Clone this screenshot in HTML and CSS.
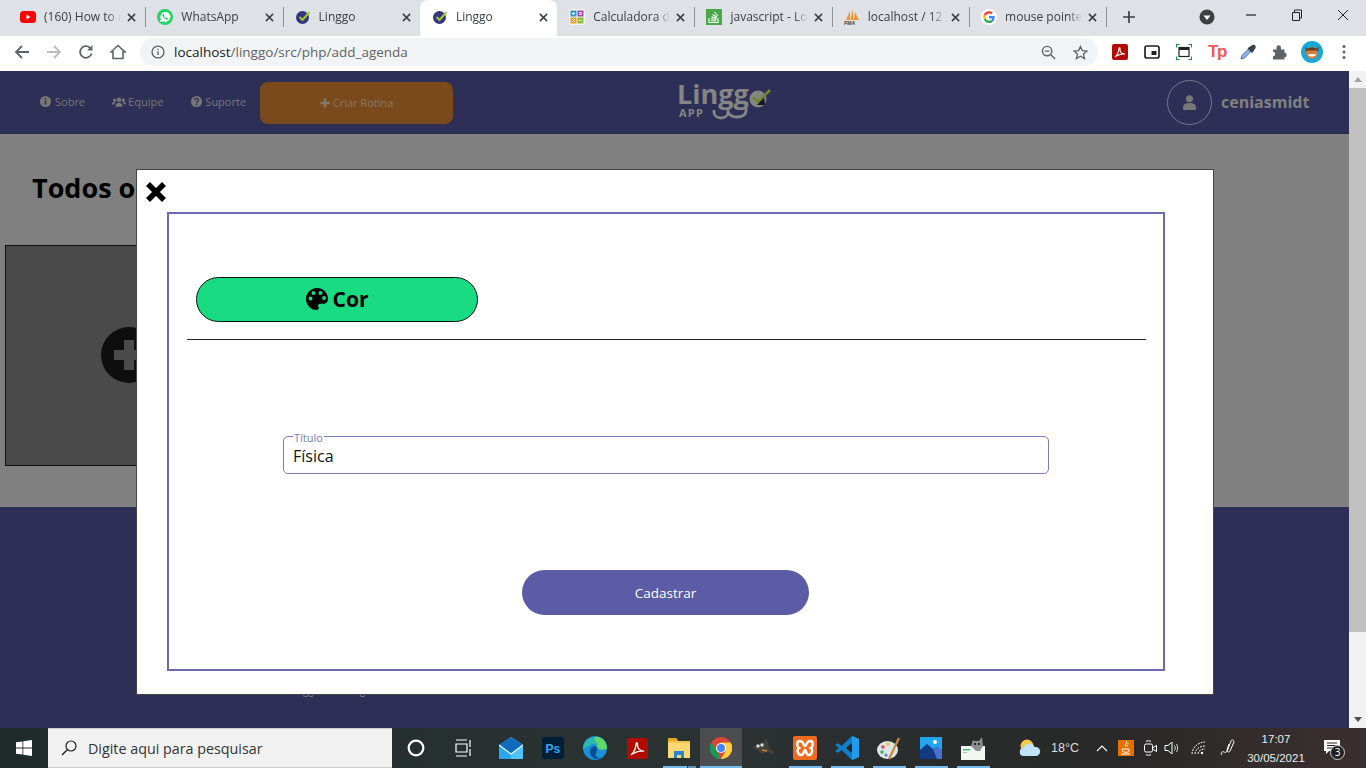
FILE: index.html
```html
<!DOCTYPE html>
<html lang="pt-BR">
<head>
<meta charset="utf-8">
<title>Linggo</title>
<link rel="stylesheet" href="styles.css">
</head>
<body>
<div class="chrome">
  <div class="tabstrip">
    <div class="tab"><svg class="fav" viewBox="0 0 16 16"><rect x="0" y="2" width="16" height="12" rx="3.500" fill="#f00"/><path d="M6.500 5.500v5l4-2.500z" fill="#fff"/></svg><span class="tab-title">(160) How to r</span><svg class="tab-x" viewBox="0 0 10 10"><path d="M1 1l8 8M9 1L1 9"/></svg></div>
    <div class="tab sep"><svg class="fav" viewBox="0 0 16 16"><circle cx="8" cy="8" r="8" fill="#25d366"/><path d="M3 13l.8-3A5 5 0 1 1 6 12.300z" fill="#fff"/><path d="M6 5c-1 1-.5 2.500 1 4s3 2 4 1l-.2-1-1.500-.6-.6.6c-1-.4-1.500-1-1.900-1.900l.6-.6L6.900 5z" fill="#25d366"/></svg><span class="tab-title">WhatsApp</span><svg class="tab-x" viewBox="0 0 10 10"><path d="M1 1l8 8M9 1L1 9"/></svg></div>
    <div class="tab sep"><svg class="fav" viewBox="0 0 16 16"><circle cx="7.500" cy="8.500" r="6.500" fill="#35357f"/><path d="M4.500 8l3 3 7-8" fill="none" stroke="#9acd32" stroke-width="2"/></svg><span class="tab-title">Linggo</span><svg class="tab-x" viewBox="0 0 10 10"><path d="M1 1l8 8M9 1L1 9"/></svg></div>
    <div class="tab active"><svg class="fav" viewBox="0 0 16 16"><circle cx="7.500" cy="8.500" r="6.500" fill="#35357f"/><path d="M4.500 8l3 3 7-8" fill="none" stroke="#9acd32" stroke-width="2"/></svg><span class="tab-title">Linggo</span><svg class="tab-x" viewBox="0 0 10 10"><path d="M1 1l8 8M9 1L1 9"/></svg></div>
    <div class="tab"><svg class="fav" viewBox="0 0 16 16"><rect width="16" height="16" rx="2" fill="#f4f4f4"/><rect x="1.500" y="1.500" width="6" height="6" fill="#2f9bd9"/><rect x="8.500" y="1.500" width="6" height="6" fill="#a0459f"/><rect x="1.500" y="8.500" width="6" height="6" fill="#ef9a1e"/><rect x="8.500" y="8.500" width="6" height="6" fill="#8fc02f"/><path d="M3 4.500h3M4.500 3v3M10 3.800h3M10 5.300h3M3.200 10.200l2.600 2.600M5.800 10.200l-2.600 2.600M10 11.500h3" stroke="#fff"/></svg><span class="tab-title">Calculadora d</span><svg class="tab-x" viewBox="0 0 10 10"><path d="M1 1l8 8M9 1L1 9"/></svg></div>
    <div class="tab sep"><svg class="fav" viewBox="0 0 16 16"><rect width="16" height="16" fill="#4aa84a"/><path d="M3 9v4.500h9V9M4.800 11.700h5.500M5 9.700l5.300.6M5.500 7.700l5.100 1.400M6.500 5.500l4.500 2.600M8.500 3l3.300 4" fill="none" stroke="#fff" stroke-width="1.100"/></svg><span class="tab-title">javascript - Lo</span><svg class="tab-x" viewBox="0 0 10 10"><path d="M1 1l8 8M9 1L1 9"/></svg></div>
    <div class="tab sep"><svg class="fav" viewBox="0 0 16 16"><path d="M2 11L6 2v9zM6.500 11L8.500 0l1 11zM10 11L11 3l4 8z" fill="#f39325"/><text x="0" y="16" class="pma">PMA</text></svg><span class="tab-title">localhost / 12</span><svg class="tab-x" viewBox="0 0 10 10"><path d="M1 1l8 8M9 1L1 9"/></svg></div>
    <div class="tab sep"><svg class="fav" viewBox="0 0 16 16"><circle cx="8" cy="8" r="8" fill="#fff"/><path d="M13.700 8.200c0-.5 0-.9-.1-1.300H8v2.500h3.200a2.800 2.800 0 0 1-1.200 1.800l1.900 1.500c1.100-1 1.800-2.600 1.800-4.500z" fill="#4285f4"/><path d="M8 14c1.600 0 3-.5 3.900-1.500L10 11c-.5.400-1.200.6-2 .6-1.500 0-2.800-1-3.300-2.400L2.800 10.700C3.800 12.700 5.700 14 8 14z" fill="#34a853"/><path d="M4.700 9.200a3.500 3.500 0 0 1 0-2.300L2.800 5.300a6 6 0 0 0 0 5.400z" fill="#fbbc05"/><path d="M8 4.400c.9 0 1.600.3 2.200.9l1.700-1.700A6 6 0 0 0 2.800 5.300l1.900 1.600C5.200 5.400 6.500 4.400 8 4.400z" fill="#ea4335"/></svg><span class="tab-title">mouse pointe</span><svg class="tab-x" viewBox="0 0 10 10"><path d="M1 1l8 8M9 1L1 9"/></svg></div>
    <div class="newtab sep">
      <svg class="newtab-plus" viewBox="0 0 14 14"><path d="M7 1v12M1 7h12" stroke="#3c4043" stroke-width="1.700"/></svg>
    </div>
    <div class="strip-right">
      <svg class="tab-search" viewBox="0 0 16 16"><circle cx="8" cy="8" r="7.500" fill="#3c4043"/><path d="M4.500 6.500h7L8 11z" fill="#fff"/></svg>
      <div class="winbtns">
        <svg class="winbtn" viewBox="0 0 46 30"><path d="M18 15h10" stroke="#222" stroke-width="1.200"/></svg>
        <svg class="winbtn" viewBox="0 0 46 30"><path d="M18.500 12.500h7v8h-7zM20.500 12.500v-2.500h7v8h-2" fill="none" stroke="#222"/></svg>
        <svg class="winbtn" viewBox="0 0 46 30"><path d="M18 10l10 10M28 10L18 20" stroke="#222" stroke-width="1"/></svg>
      </div>
    </div>
  </div>
  <div class="toolbar">
    <svg class="tool" viewBox="0 0 16 16"><path d="M15 8H2M8 2L2 8l6 6" fill="none" stroke="#5f6368" stroke-width="1.800"/></svg>
    <svg class="tool" viewBox="0 0 16 16"><path d="M1 8h13M8 2l6 6-6 6" fill="none" stroke="#b9bbbe" stroke-width="1.800"/></svg>
    <svg class="tool" viewBox="0 0 16 16"><path d="M13.500 9.500A5.800 5.800 0 1 1 12 3.900" fill="none" stroke="#5f6368" stroke-width="1.800"/><path d="M14.500 1v5.500H9z" fill="#5f6368"/></svg>
    <svg class="tool" viewBox="0 0 16 16"><path d="M1 8l7-6.500L15 8h-2v6.500H3V8z" fill="none" stroke="#5f6368" stroke-width="1.600"/></svg>
    <div class="omnibox">
      <svg class="info" viewBox="0 0 16 16"><circle cx="8" cy="8" r="6.800" fill="none" stroke="#5f6368" stroke-width="1.500"/><path d="M8 7v4.500M8 4.300v1.500" stroke="#5f6368" stroke-width="1.600"/></svg>
      <span class="url"><span class="host">localhost</span>/linggo/src/php/add_agenda</span>
      <svg class="omni-ic zoom-ic" viewBox="0 0 16 16"><circle cx="6.500" cy="6.500" r="5" fill="none" stroke="#5f6368" stroke-width="1.500"/><path d="M10.200 10.200L15 15M4 6.500h5" stroke="#5f6368" stroke-width="1.500"/></svg>
      <svg class="omni-ic" viewBox="0 0 16 16"><path d="M8 1.500l2 4.500 4.900.5-3.700 3.200 1.100 4.800L8 12l-4.300 2.500 1.100-4.800L1.100 6.500 6 6z" fill="none" stroke="#5f6368" stroke-width="1.400"/></svg>
    </div>
    <div class="exts">
      <svg class="ext" viewBox="0 0 16 16"><rect width="16" height="16" rx="2" fill="#b30b00"/><path d="M3 13c2-1.500 3.500-4.500 4-8.500.2-1.500 1.300-1 1 .5-.4 2.500 2 5.500 5 5-3-.5-6 .5-8.500 2" fill="none" stroke="#fff" stroke-width="1.100"/></svg>
      <svg class="ext" viewBox="0 0 16 16"><rect x="1" y="2" width="14" height="12" rx="2" fill="none" stroke="#222" stroke-width="1.700"/><rect x="7.500" y="7" width="5" height="4" fill="#222"/></svg>
      <svg class="ext" viewBox="0 0 16 16"><path d="M.5 3.500V.5h3M12.500.5h3v3M.5 12.500v3h3M12.500 15.500h3v-3" fill="none" stroke="#1e8e3e" stroke-width="1.200"/><rect x="3" y="3.500" width="10" height="9" fill="none" stroke="#222" stroke-width="1.200"/><path d="M3 5h10" stroke="#222" stroke-width="2"/></svg>
      <span class="ext-tp">Tp</span>
      <svg class="ext" viewBox="0 0 16 16"><path d="M1 15l1-3.500 6-6 2.500 2.500-6 6z" fill="#8ab4f8" stroke="#5a6a8a"/><path d="M7.500 4.500l1-1 4-2.500c2-1 4 1 3 3l-2.500 4-1 1z" fill="#3a3f48"/></svg>
      <svg class="ext" viewBox="0 0 16 16"><path d="M1 5.500h3.500V3.500a2.200 2.200 0 0 1 4.400 0v2H12.500v3.300a2.200 2.200 0 0 1 0 4.400V15.500H1v-3.300a2.200 2.200 0 0 0 0-4.400z" fill="#5f6368"/></svg>
      <svg class="avatar" viewBox="0 0 22 22"><circle cx="11" cy="11" r="11" fill="#17a9d6"/><path d="M4 5l3 4h8l3-4-1 6H5z" fill="#6b3b1e"/><circle cx="11" cy="12" r="6" fill="#d9793b"/><path d="M5 9.500c1-4 11-4 12 0z" fill="#6b3b1e"/><path d="M7 13h8c-.5 3.500-7.500 3.500-8 0z" fill="#fff"/></svg>
      <svg class="menu" viewBox="0 0 4 16"><circle cx="2" cy="2.500" r="1.500" fill="#5f6368"/><circle cx="2" cy="8" r="1.500" fill="#5f6368"/><circle cx="2" cy="13.500" r="1.500" fill="#5f6368"/></svg>
    </div>
  </div>
</div>

<div class="viewport">
  <div class="page">
    <header class="site-header">
      <nav class="nav">
        <a class="nav-link"><svg class="nav-ic" viewBox="0 0 12 12"><circle cx="6" cy="6" r="6"/><path d="M6 5v4.500M6 2.300v1.500" stroke="#2e2f56" stroke-width="1.700"/></svg>Sobre</a>
        <a class="nav-link"><svg class="nav-ic wide" viewBox="0 0 16 12"><circle cx="8" cy="4" r="2.600"/><circle cx="3" cy="4.500" r="1.800"/><circle cx="13" cy="4.500" r="1.800"/><path d="M3.800 12c0-6 8.400-6 8.400 0zM0 9.500c0-3.500 3-3.500 4-3-1.200 1-1.500 2-1.500 3zM16 9.500c0-3.500-3-3.500-4-3 1.200 1 1.500 2 1.500 3z"/></svg>Equipe</a>
        <a class="nav-link"><svg class="nav-ic" viewBox="0 0 12 12"><circle cx="6" cy="6" r="6"/><path d="M4 4.500c0-2.500 4-2.500 4 0 0 1.500-2 1.500-2 3M6 8.500v1.500" fill="none" stroke="#2e2f56" stroke-width="1.500"/></svg>Suporte</a>
        <a class="cta"><svg class="cta-ic" viewBox="0 0 12 12"><path d="M6 .5v11M.5 6h11" stroke-width="3"/></svg>Criar Rotina</a>
      </nav>
      <div class="logo">
        <span class="logo-word">Lingg</span><span class="logo-app">APP</span>
        <svg class="logo-art" viewBox="0 0 94 40"><path d="M37 29v2c0 8 14 8 14 0v-3M51 30c0 8 18 8 18 0v-4" fill="none" stroke="#858585" stroke-width="2.800"/><circle cx="81" cy="18" r="8.500" fill="#858585"/><path d="M80 24h8l-1-9z" fill="#15162b"/><path d="M76 16l5 5 12-12" fill="none" stroke="#6f8a2b" stroke-width="2.600"/></svg>
      </div>
      <div class="user">
        <div class="user-circle"><svg class="user-ic" viewBox="0 0 12 14"><circle cx="6" cy="3.500" r="3.300"/><path d="M0 14v-2.500C0 8.500 2.500 7.500 6 7.500s6 1 6 4V14z"/></svg></div>
        <span class="user-name">ceniasmidt</span>
      </div>
    </header>
    <section class="content">
      <h1 class="title">Todos os meus cronogramas</h1>
      <div class="card"><svg class="card-plus" viewBox="0 0 56 56"><circle cx="28" cy="28" r="28" fill="#0e0e0e"/><path d="M28 13v30M13 28h30" stroke="#4a4a4a" stroke-width="10"/></svg></div>
    </section>
    <footer class="site-footer"><span class="footer-text">Linggo Todos Agora</span></footer>

    <div class="modal">
      <svg class="modal-x" viewBox="0 0 22 22"><path d="M3 3l16 16M19 3L3 19" stroke="#000" stroke-width="5.500"/></svg>
      <form class="frame">
        <div class="color-row">
          <button type="button" class="color-btn"><svg class="palette" viewBox="0 0 22 22"><path fill-rule="evenodd" d="M11 0C5 0 0 5 0 11s5 11 10.500 11c2.500 0 2.500-2 1.800-3.200-.8-1.500.2-3 2-3h3.200c2.500 0 4.500-2 4.500-4.800C22 4.500 17 0 11 0zM4.500 12.500a2 2 0 1 1 0-4 2 2 0 0 1 0 4zm3-5.500a2 2 0 1 1 0-4 2 2 0 0 1 0 4zm7 0a2 2 0 1 1 0-4 2 2 0 0 1 0 4zm3.500 5a2 2 0 1 1 0-4 2 2 0 0 1 0 4z"/></svg><span class="color-label">Cor</span></button>
        </div>
        <hr class="rule">
        <fieldset class="field"><legend class="field-label">Título</legend><span class="field-value">Física</span></fieldset>
        <button type="button" class="submit">Cadastrar</button>
      </form>
    </div>
  </div>
  <div class="scrollbar">
    <span class="arrow up"></span>
    <div class="thumb"></div>
    <span class="arrow down"></span>
  </div>
</div>

<div class="taskbar">
  <svg class="start" viewBox="0 0 16 16"><path d="M0 2.300l6.500-.9v6.200H0zM7.300 1.300L16 0v7.600H7.300zM0 8.400h6.500v6.200L0 13.700zM7.300 8.400H16V16l-8.700-1.200z" fill="#fff"/></svg>
  <div class="search"><svg class="search-ic" viewBox="0 0 16 16"><circle cx="10" cy="6" r="5" fill="none" stroke="#222" stroke-width="1.200"/><path d="M6.300 9.700L1 15" stroke="#222" stroke-width="1.400"/></svg><span class="search-text">Digite aqui para pesquisar</span></div>
  <div class="apps">
    <div class="app cortana"><svg class="i16" viewBox="0 0 16 16"><circle cx="8" cy="8" r="6.500" fill="none" stroke="#fff" stroke-width="2"/></svg></div>
    <div class="app taskview"><svg class="i18" viewBox="0 0 18 18"><path d="M2 1h11M2 17h11M2 5h11v8H2zM16 1v7M16 10v7" fill="none" stroke="#fff" stroke-width="1.200"/></svg></div>
    <div class="app"><svg class="i24" viewBox="0 0 24 24"><path d="M0 9L12 1l12 8v14H0z" fill="#2aa7ef"/><path d="M12 1l12 8v14H12z" fill="#4fc3f7"/><path d="M0 9L12 1l12 8-12 9z" fill="#0f6cbd"/><path d="M0 9l12 9 12-9" fill="none" stroke="#e8f7ff" stroke-width="1.300"/></svg></div>
    <div class="app"><svg class="i22" viewBox="0 0 22 22"><rect width="22" height="22" rx="3" fill="#001e36"/><text x="3.500" y="16" class="ps">Ps</text></svg></div>
    <div class="app"><svg class="i24" viewBox="0 0 24 24"><circle cx="12" cy="12" r="12" fill="#1b8fd8"/><path d="M0 12C1 3 11-1 18 2c4 2 6 6 6 11-4 2-10 2-10-2 0-3-4-4-7-2-3 2-6 5-7 3z" fill="#2cb8b0"/><path d="M12 1c5-1 11 3 12 11-3 2-9 2-10-1 0-1 2-2 0-4-2-2-3-4-2-6z" fill="#5fd86a"/><path d="M14 11c-4-2-7 1-7 5 0 5 6 9 12 6-5 1-7-2-6-5 .3-2 2-4 1-6z" fill="#0c4f94"/></svg></div>
    <div class="app"><svg class="i21" viewBox="0 0 16 16"><rect width="16" height="16" rx="2" fill="#b30b00"/><path d="M3 13c2-1.500 3.500-4.500 4-8.500.2-1.500 1.300-1 1 .5-.4 2.500 2 5.500 5 5-3-.5-6 .5-8.500 2" fill="none" stroke="#fff" stroke-width="1"/></svg></div>
    <div class="app running stacked"><svg class="i22" viewBox="0 0 22 22"><path d="M0 1h8l2 3h12v17H0z" fill="#f4c64f"/><path d="M0 1h8l2 3H0z" fill="#e0a52c"/><path d="M0 6h22v15H0z" fill="#fbd871"/><path d="M6 21v-7h10v7h-3v-3H9v3z" fill="#2a84d0"/></svg></div>
    <div class="app running active-app"><svg class="i22" viewBox="0 0 24 24"><circle cx="12" cy="12" r="12" fill="#db4437"/><path d="M12 24A12 12 0 0 1 1.600 6L7 15l5 9z" fill="#0f9d58"/><path d="M12 6h10.600A12 12 0 0 1 12 24l5-9z" fill="#ffcd40"/><circle cx="12" cy="12" r="5.500" fill="#fff"/><circle cx="12" cy="12" r="4.300" fill="#4285f4"/></svg></div>
    <div class="app"><svg class="i24" viewBox="0 0 24 24"><path d="M2 10c4 0 8-2 11-5l2-3 2 5 1 5c2 2 3 3 5 4l-1 2-7-2c-3 3-7 1-8-2-3 0-5-2-5-4z" fill="#44413b"/><circle cx="7" cy="10" r="1.700" fill="#ddd"/><circle cx="11" cy="9" r="1.700" fill="#ddd"/><path d="M11 14l5 1" stroke="#c98b3a" stroke-width="1.500"/></svg></div>
    <div class="app running"><svg class="i24" viewBox="0 0 24 24"><rect width="24" height="24" rx="2" fill="#ee6a1f"/><path d="M7 5c4 0 3 5 5 5s1-5 5-5 3 6 1 7c2 1 1 7-2 7-4 0-2-5-4-5s0 5-4 5-4-6-2-7c-2-1-3-7 1-7z" fill="none" stroke="#fff" stroke-width="2.400"/></svg></div>
    <div class="app running"><svg class="i24" viewBox="0 0 24 24"><path d="M17 0l7 3v18l-7 3L6.500 14 3 17l-3-2 4-3-4-3 3-2 3.500 3z" fill="#0f7fcc"/><path d="M17 0l7 3v18l-7 3z" fill="#1f9cf0"/><path d="M17 6.500L11 12l6 5.500z" fill="#26292b"/></svg></div>
    <div class="app running"><svg class="i24" viewBox="0 0 24 24"><ellipse cx="10.500" cy="14" rx="10.500" ry="9" fill="#dce6ea"/><circle cx="6" cy="11" r="1.800" fill="#d9534f"/><circle cx="11" cy="8" r="1.800" fill="#f0c040"/><circle cx="5" cy="16" r="1.800" fill="#4caf50"/><circle cx="9" cy="19" r="1.500" fill="#3f7fd0"/><path d="M22 2L12 23" stroke="#c98b3a" stroke-width="2.200"/></svg></div>
    <div class="app running"><svg class="i22" viewBox="0 0 22 22"><rect width="22" height="22" fill="#22a5ec"/><path d="M0 22V13l7-6 6 5 4-2 5 4v8z" fill="#123a80"/><path d="M13 12l4-2 5 4v8h-5z" fill="#4a6fd0"/><circle cx="15" cy="5" r="2" fill="#fff"/></svg></div>
    <div class="app running"><svg class="i24" viewBox="0 0 24 24"><rect y="10" width="24" height="14" fill="#f4f6f4"/><rect x="2" y="13" width="7" height="1.500" fill="#35c26a"/><rect x="2" y="16" width="4" height="1" fill="#bbb"/><path d="M10 10l2-6 2 1h4l3-4 1 9-3 5-4 0z" fill="#8f8f8f"/><circle cx="14" cy="8" r="1.100" fill="#111"/><circle cx="18" cy="8" r="1.100" fill="#111"/></svg></div>
  </div>
  <div class="tray">
    <svg class="weather" viewBox="0 0 22 18"><circle cx="8" cy="7" r="6.500" fill="#f5c84c"/><path d="M5 17a4 4 0 0 1-.5-8 6 6 0 0 1 11-1 4.500 4.500 0 0 1 2 9z" fill="#bfe3f7"/></svg>
    <span class="temp">18°C</span>
    <svg class="caret" viewBox="0 0 12 8"><path d="M1 7l5-5 5 5" fill="none" stroke="#fff" stroke-width="1.200"/></svg>
    <svg class="tray-ic java" viewBox="0 0 16 16"><rect width="16" height="16" fill="#e76f00"/><path d="M8.500 1c1 2-2.500 3-1 5.500M10 3c.5 1.500-1.500 2-.8 3.500M4 9h7v2.500c0 1-6 1-6 0zM3 14h9" fill="none" stroke="#fff" stroke-width="1"/></svg>
    <svg class="tray-ic meet" viewBox="0 0 16 18"><path d="M4 2.500c1-1 4-1 5 0M4 15.500c1 1 4 1 5 0" fill="none" stroke="#fff"/><rect x="2.500" y="5" width="8" height="8" rx="1.500" fill="none" stroke="#fff"/><path d="M10.500 9l4-2.500v6l-4-2.500" fill="none" stroke="#fff"/></svg>
    <svg class="tray-ic vol" viewBox="0 0 16 16"><path d="M1 5.500h3L8 2v12l-4-3.500H1z" fill="none" stroke="#fff"/><path d="M10.500 5.500c1 1.500 1 3.500 0 5M12.500 4c1.500 2.500 1.500 5.500 0 8" fill="none" stroke="#fff" opacity=".8"/></svg>
    <svg class="tray-ic wifi" viewBox="0 0 16 16"><path d="M1 14C1 8 7 2 14 2M4 14c0-4 4-8 10-8M7 14c0-2 2-5 7-5" fill="none" stroke="#fff" stroke-dasharray="2 1"/><circle cx="11" cy="13" r="1.200" fill="#fff"/></svg>
    <svg class="tray-ic pen" viewBox="0 0 16 18"><path d="M3 16c-2-2 0-4 2-3s3 0 4-3l3-8c1-2 3-1 3 1l-4 9c-1 2-3 1-3-1l2-6" fill="none" stroke="#fff"/></svg>
    <div class="clock"><span class="clock-line">17:07</span><span class="clock-line">30/05/2021</span></div>
    <div class="notif"><svg class="notif-ic" viewBox="0 0 16 16"><path d="M0 1h16v11H5l-3 3v-3H0z" fill="#fff"/><path d="M3 4h10M3 6.500h10M3 9h7" stroke="#222"/></svg><span class="notif-badge">3</span></div>
  </div>
</div>
</body>
</html>
```
FILE: styles.css
```css
* { box-sizing: border-box; }
html, body { margin: 0; padding: 0; }
body {
  width: 1366px;
  height: 768px;
  overflow: hidden;
  display: flex;
  flex-direction: column;
  font-family: "Open Sans", "Noto Sans", sans-serif;
  background: #fff;
}
svg { display: block; flex: none; }

/* Browser chrome */
.chrome { flex: none; height: 71px; background: #fff; }
.tabstrip {
  height: 36px;
  background: #dee1e6;
  display: flex;
  padding-left: 8px;
}
.tab {
  width: 137.300px;
  flex: none;
  height: 34px;
  display: flex;
  align-items: center;
  padding: 0 9px 0 12px;
  position: relative;
  font-size: 12px;
  color: #3c4043;
}
.tab.sep::before, .newtab.sep::before {
  content: "";
  position: absolute;
  left: 0;
  top: 7px;
  height: 20px;
  width: 1px;
  background: #8d9096;
}
.tab.active {
  background: #fff;
  height: 36px;
  padding-bottom: 2px;
  border-radius: 8px 8px 0 0;
}
.fav { width: 16px; height: 16px; }
.pma { font: italic bold 5px "Liberation Sans", sans-serif; fill: #444; }
.tab-title {
  flex: 1;
  min-width: 0;
  margin: 0 6px 1px 8px;
  white-space: nowrap;
  overflow: hidden;
  -webkit-mask-image: linear-gradient(to right, #000 82%, transparent 100%);
  mask-image: linear-gradient(to right, #000 82%, transparent 100%);
}
.tab-x { width: 9px; height: 9px; fill: none; stroke: #3c4043; stroke-width: 1.700; }
.newtab {
  width: 46px;
  flex: none;
  height: 34px;
  position: relative;
  display: flex;
  align-items: center;
  justify-content: center;
}
.newtab-plus { width: 14px; height: 14px; }
.strip-right { flex: 1; display: flex; align-items: flex-start; justify-content: flex-end; }
.tab-search { width: 16px; height: 16px; margin: 9px 13px 0 0; }
.winbtns { display: flex; }
.winbtn { width: 46px; height: 30px; }

.toolbar { height: 35px; display: flex; align-items: center; padding: 0 0 3px 14px; background: #fff; }
.tool { width: 16px; height: 16px; margin-right: 16px; }
.omnibox {
  width: 958px;
  height: 28px;
  margin-left: -2px;
  border-radius: 14px;
  background: #f1f3f4;
  display: flex;
  align-items: center;
  padding: 0 10px 0 11px;
}
.info { width: 14px; height: 14px; }
.url { flex: 1; margin-left: 9px; font-size: 13.500px; color: #5f6368; white-space: nowrap; }
.host { color: #202124; }
.omni-ic { width: 15px; height: 15px; margin-left: 17px; }
.exts { display: flex; align-items: center; margin-left: 14px; }
.ext { width: 16px; height: 16px; margin-right: 16px; }
.ext-tp { width: 16px; margin-right: 16px; font: bold 17px/16px "Liberation Sans", sans-serif; color: #f55656; letter-spacing: -1.500px; }
.avatar { width: 22px; height: 22px; margin-left: -3px; margin-right: 19px; }
.menu { width: 4px; height: 16px; }

/* Page */
.viewport { flex: none; height: 657px; display: flex; }
.page { flex: 1; position: relative; display: flex; flex-direction: column; background: #2d2f56; }
.site-header {
  height: 63px;
  background: #2e2f56;
  display: flex;
  align-items: center;
  padding-left: 40px;
  border-bottom: 1px solid #2a2a40;
}
.nav { display: flex; align-items: center; flex: none; width: 413px; }
.nav-link {
  display: flex;
  align-items: center;
  font-size: 11px;
  color: #777;
  margin: 0 27px 2px 0;
}
.nav-link:nth-child(2) { margin-right: 28px; }
.nav-link:nth-child(3) { margin-right: 14px; }
.nav-link:nth-child(3) .nav-ic { margin-right: 3px; }
.nav-ic { width: 11px; height: 11px; margin-right: 4px; fill: #777; }
.nav-ic.wide { width: 14px; margin-right: 2px; }
.cta {
  width: 193px;
  height: 42px;
  margin-top: 1px;
  background: #7a4a1d;
  border-radius: 8px;
  display: flex;
  align-items: center;
  justify-content: center;
  font-size: 11px;
  color: #84766a;
}
.cta-ic { width: 10px; height: 10px; margin-right: 3px; stroke: #84766a; }
.logo {
  position: relative;
  flex: none;
  margin-left: 224px;
  width: 94px;
  height: 63px;
}
.logo-word { position: absolute; left: 0; top: 11px; font-size: 27px; line-height: 24px; color: #858585; letter-spacing: 0; font-weight: 700; }
.logo-app { position: absolute; left: 2px; top: 36px; font-size: 11px; line-height: 11px; font-weight: 700; color: #858585; letter-spacing: 1.200px; }
.logo-art { position: absolute; left: 0; top: 10px; width: 94px; height: 40px; }
.user {
  flex: none;
  margin-left: 396px;
  display: flex;
  align-items: center;
}
.user-circle {
  width: 45px;
  height: 45px;
  border: 1px solid #77778a;
  border-radius: 50%;
  display: flex;
  align-items: center;
  justify-content: center;
}
.user-ic { width: 13px; height: 15px; fill: #777; }
.user-name { margin: 0 0 1px 9px; font-size: 16px; font-weight: 700; color: #808080; }
.content { height: 373px; background: #808080; padding: 36px 0 0 5px; }
.title { margin: 0 0 39px 27px; font-size: 27px; line-height: 36px; color: #000; font-weight: 700; white-space: nowrap; }
.card {
  width: 248px;
  height: 221px;
  padding-bottom: 1px;
  background: #4a4a4a;
  border: 1px solid #111;
  display: flex;
  align-items: center;
  justify-content: center;
}
.card-plus { width: 56px; height: 56px; }
.site-footer { flex: 1; background: #2d2f56; padding: 176px 0 0 289px; }
.footer-text { display: block; font-size: 10px; line-height: 14px; color: #888; }

/* Modal */
.modal {
  position: absolute;
  left: 136px;
  top: 98px;
  width: 1078px;
  height: 526px;
  background: #fff;
  border: 1px solid #444;
  padding: 42px 0 0 30px;
}
.modal-x { position: absolute; left: 8px; top: 11px; width: 22px; height: 22px; }
.frame {
  width: 998px;
  height: 459px;
  border: 2px solid #6d6ab5;
  padding: 63px 0 0 18px;
  display: flex;
  flex-direction: column;
  align-items: flex-start;
}
.color-row { padding-left: 9px; }
.color-btn {
  width: 282px;
  height: 45px;
  border: 1px solid #111;
  border-radius: 23px;
  background: #19db82;
  display: flex;
  align-items: center;
  justify-content: center;
  font: 700 21px/28px "Open Sans", sans-serif;
  color: #000;
  padding: 0 0 1px;
}
.palette { width: 22px; height: 22px; margin-right: 5px; }
.rule { width: 959px; height: 1px; margin: 17px 0 0 0; border: 0; background: #222; }
.field {
  width: 766px;
  height: 45px;
  margin: 89px 0 0 96px;
  padding: 0 9px;
  border: 1px solid #7c79bc;
  border-radius: 5px;
  min-inline-size: 0;
}
.field-label { padding: 3px 1px 0; font-size: 11px; line-height: 11px; color: #7c79bc; margin-left: 0; }
.field-value { display: block; font-size: 16px; line-height: 24px; color: #111; margin-top: 1px; }
.submit {
  width: 287px;
  height: 45px;
  margin: 96px 0 0 335px;
  border: 0;
  border-radius: 23px;
  background: #5b5ba6;
  color: #fff;
  font: 400 13.500px "Open Sans", sans-serif;
}

/* Scrollbar */
.scrollbar { width: 17px; background: #f1f1f1; display: flex; flex-direction: column; align-items: center; }
.arrow { width: 0; height: 0; border-left: 4px solid transparent; border-right: 4px solid transparent; }
.arrow.up { border-bottom: 5px solid #a3a3a3; margin: 6px 0; }
.arrow.down { border-top: 5px solid #505050; margin: auto 0 6px; }
.thumb { flex: none; height: 544px; width: 100%; background: #c1c1c1; }

/* Taskbar */
.taskbar {
  flex: none;
  height: 40px;
  display: flex;
  align-items: center;
  background: linear-gradient(to right, #1f2a2b 0%, #2b3332 50%, #282828 80%, #3a2f30 100%);
}
.start { width: 16px; height: 16px; margin: 0 16px; }
.search {
  width: 344px;
  height: 40px;
  background: #f1f1f1;
  border-top: 1px solid #ccc;
  border-bottom: 1px solid #ccc;
  display: flex;
  align-items: center;
  padding-left: 13px;
}
.search-ic { width: 16px; height: 16px; }
.search-text { margin-left: 11px; font-size: 14.300px; color: #333; white-space: nowrap; }
.apps { display: flex; height: 40px; }
.app {
  width: 42px;
  height: 40px;
  display: flex;
  align-items: center;
  justify-content: center;
  position: relative;
}
.app.cortana { width: 48px; }
.app.taskview { width: 46px; margin-right: 4px; }
.app.running::after {
  content: "";
  position: absolute;
  left: 5px;
  right: 4px;
  bottom: 0;
  height: 2px;
  background: #76b9ed;
}
.app.stacked::after { background: linear-gradient(to right, #76b9ed 0 24px, #2d3a40 24px 25px, #5c8fb5 25px); }
.app.active-app { background: #4b4d4f; }
.app.active-app::after { left: 0; right: 0; }
.i16 { width: 18px; height: 18px; }
.i18 { width: 18px; height: 18px; }
.i21 { width: 21px; height: 21px; }
.i22 { width: 22px; height: 22px; }
.i24 { width: 24px; height: 24px; }
.ps { font: bold 12px "Liberation Sans", sans-serif; fill: #31a8ff; }
.tray { display: flex; align-items: center; color: #fff; margin-left: 25px; }
.weather { width: 22px; height: 18px; }
.temp { margin-left: 10px; font: 12.500px "Liberation Sans", sans-serif; width: 27px; color: #ddd; }
.caret { width: 12px; height: 8px; margin-left: 18px; }
.tray-ic { width: 16px; height: 18px; }
.java { height: 16px; margin-left: 10px; }
.meet { margin-left: 8px; }
.vol { margin-left: 6px; }
.wifi { margin-left: 11px; }
.pen { margin-left: 12px; }
.clock { display: flex; flex-direction: column; align-items: center; margin-left: 8px; width: 66px; font: 11.500px/19px "Liberation Sans", sans-serif; padding-top: 1px; color: #eee; }
.clock-line { white-space: nowrap; }
.notif { position: relative; width: 22px; height: 24px; margin-left: 14px; }
.notif-ic { width: 16px; height: 16px; margin: 3px 0 0 1px; }
.notif-badge {
  position: absolute;
  left: 7px;
  top: 9px;
  width: 15px;
  height: 15px;
  border: 1px solid #ccc;
  border-radius: 50%;
  background: #222;
  font-size: 10px;
  line-height: 13px;
  text-align: center;
}
```
